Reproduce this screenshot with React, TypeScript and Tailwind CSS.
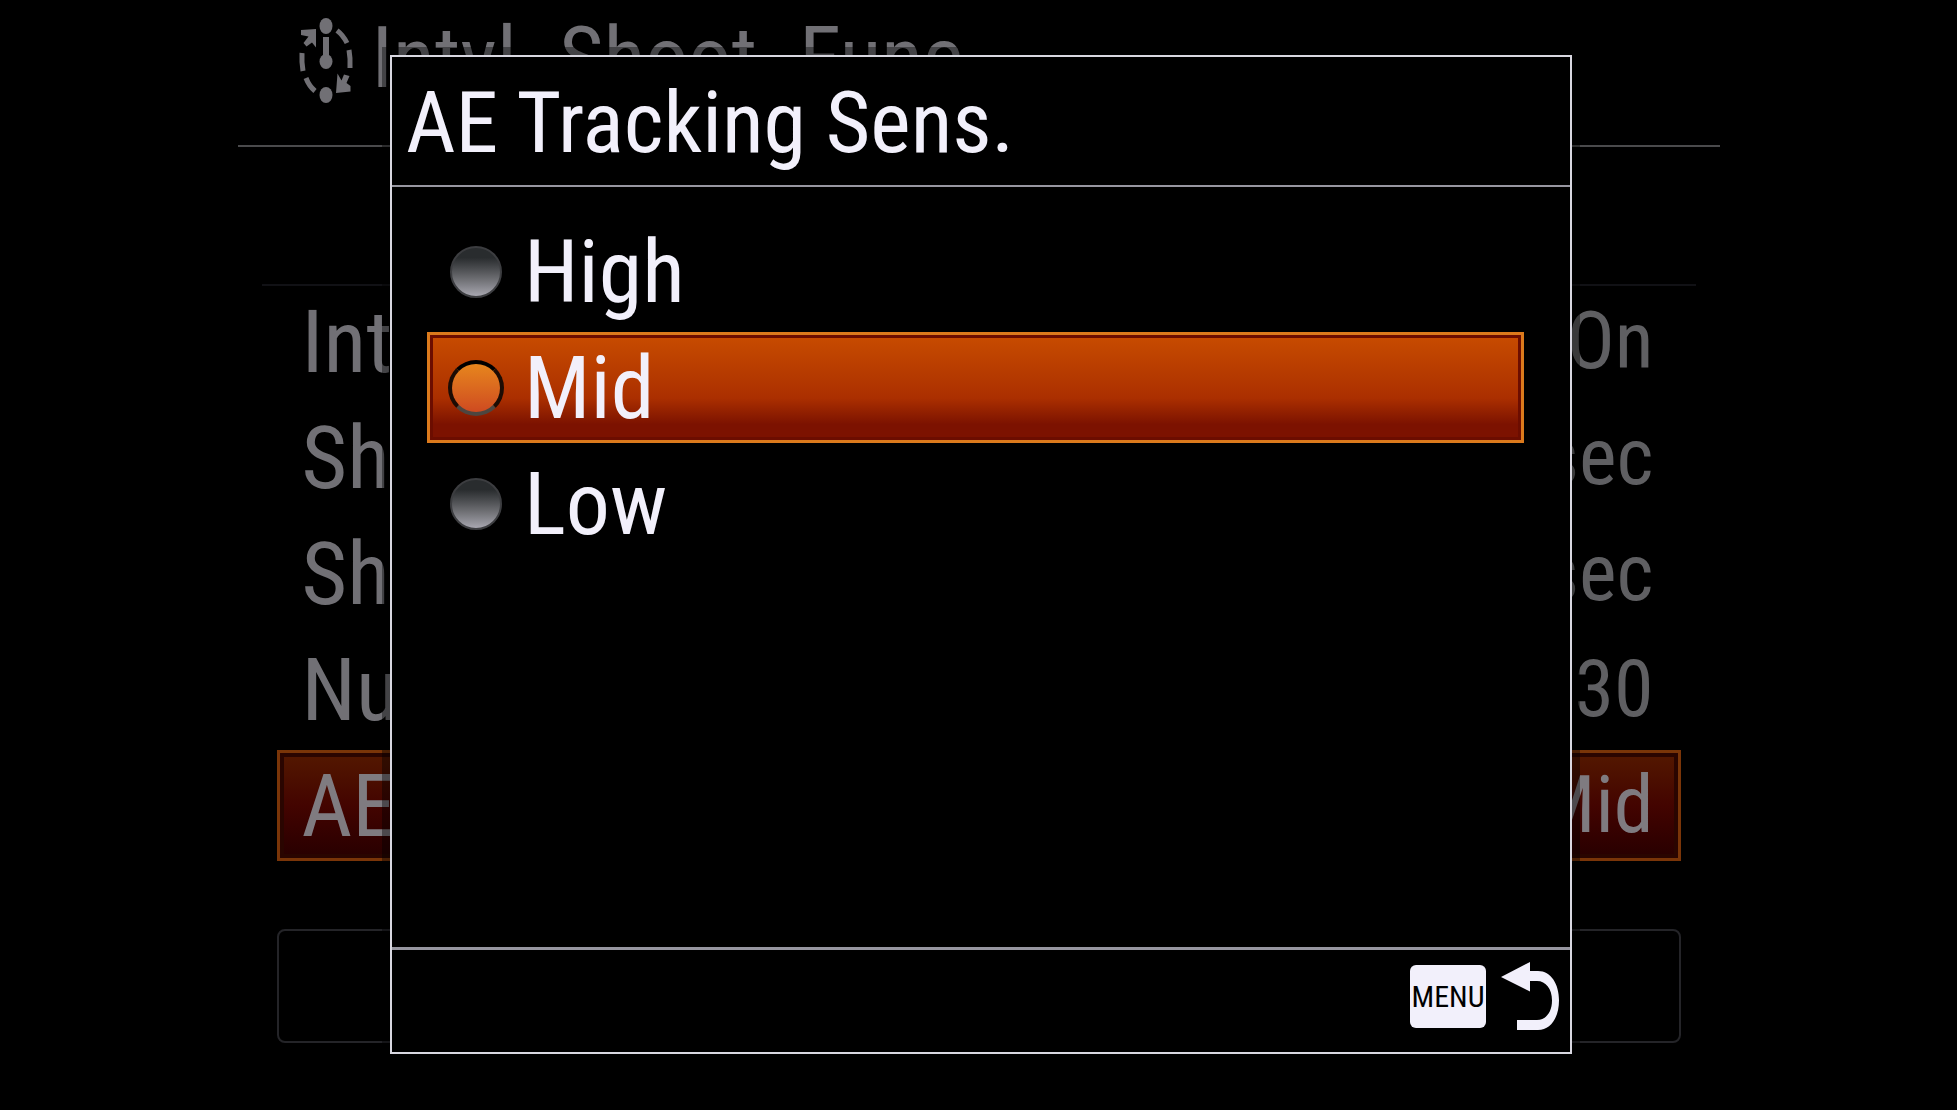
import { useState } from 'react'
import clsx from 'clsx'

const MENU_ROWS = [
  { label: 'Int', value: 'On' },
  { label: 'Sh', value: 'sec' },
  { label: 'Sh', value: 'sec' },
  { label: 'Nu', value: '30' },
  { label: 'AE', value: 'Mid', active: true },
]

const OPTIONS = ['High', 'Mid', 'Low']

function IntervalIcon() {
  return (
    <svg viewBox="0 0 56 86" className="h-[86px] w-[56px] shrink-0" fill="#717075" aria-hidden="true">
      <ellipse cx="28" cy="8" rx="6.5" ry="8" />
      <ellipse cx="28" cy="43.5" rx="6.5" ry="7.5" />
      <ellipse cx="28" cy="77" rx="6.5" ry="8" />
      <path d="M25 19h6v22h-6z" />
      <path d="M3 12 18 11V29.500L14 24.500 8.500 28.500 5.500 25 10.500 18.500 3 17z" />
      <path d="M38 75 52.500 73.500V68L48.500 65 51.500 58 46 56.500 43.500 62.500 39.500 55.500z" />
      <g fill="none" stroke="#717075" strokeWidth="5">
        <path d="M39 12.500Q45 17 49 25M51 32Q52.500 40 52 50M4 35Q3.500 44 5 53M8 60Q11 68 17 73" />
      </g>
    </svg>
  )
}

function ReturnIcon() {
  return (
    <svg viewBox="0 0 60 70" className="h-[70px] w-[60px] shrink-0" fill="#f2f0fb" aria-hidden="true">
      <path d="M1 16 30 1V10H38C51 10 59 23 59 39.500S51 69 38 69H17V59H37C46 59 52 51 52 39.500S46 20 37 20H30V30.500z" />
    </svg>
  )
}

function BackgroundMenu() {
  return (
    <main className="mx-auto w-full max-w-[1482px] text-[#717075]">
      <header className="flex h-[147px] items-start gap-[18px] border-b-2 border-[#4a4a4c] pl-[60px] pt-[18px]">
        <IntervalIcon />
        <h1 className="text-[86px] leading-[80px]">Intvl. Shoot. Func.</h1>
      </header>
      <div className="mx-6 h-[139px] border-b-2 border-[#111115]" />
      <ul className="mx-[39px] flex flex-col gap-[5px]">
        {MENU_ROWS.map((row, i) => (
          <li
            key={i}
            className={clsx(
              'flex h-[111px] items-center justify-between border-[3px] pl-[22px] pr-6 leading-[105px]',
              row.active
                ? 'border-[#7a3508] bg-linear-to-b from-[#541800] via-[#430400] to-[#280000] text-[#7f7b80] shadow-[inset_0_0_0_4px_#2a0500]'
                : 'border-transparent'
            )}
          >
            <span className="text-[88px]">{row.label}</span>
            <span className={clsx('text-[80px]', !row.active && 'text-[#5f5f62]')}>{row.value}</span>
          </li>
        ))}
      </ul>
      <div className="mx-[39px] mt-[68px] h-[114px] rounded-lg border-2 border-[#242428]" />
    </main>
  )
}

export default function App() {
  const [selected, setSelected] = useState('Mid')

  return (
    <div className="relative min-h-screen overflow-hidden bg-black font-['Roboto_Condensed','Roboto',sans-serif]">
      <BackgroundMenu />

      {/* dialog floats over the dimmed menu */}
      <div className="absolute inset-0 flex items-start justify-center pl-[5px] pt-[55px]">
        <section
          role="dialog"
          aria-labelledby="dialog-title"
          className="w-full max-w-[1182px] border-2 border-[#d8d7e0] bg-black text-[#f2f0fb] shadow-[0_0_0_8px_rgba(0,0,0,0.4)]"
        >
          <h2 id="dialog-title" className="h-[130px] border-b-2 border-[#9796a0] pl-3.5 text-[86px] leading-[132px]">
            AE Tracking Sens.
          </h2>

          <fieldset className="flex h-[760px] flex-col gap-[5px] pl-[35px] pr-[46px] pt-[29px]">
            {OPTIONS.map((option) => {
              const checked = option === selected
              return (
                <label
                  key={option}
                  className={clsx(
                    'flex h-[111px] items-center gap-5 border-[3px] pl-[18px] text-[88px] leading-[105px]',
                    checked
                      ? 'border-[#dc7a1c] bg-linear-to-b from-[#c84c00] via-[#ab2f00] via-60% to-[#7c1200] to-85% shadow-[inset_0_0_0_3px_#6c0d00]'
                      : 'border-transparent'
                  )}
                >
                  <span className="flex size-14 shrink-0 items-center justify-center">
                    <input
                      type="radio"
                      name="sensitivity"
                      value={option}
                      checked={checked}
                      onChange={() => setSelected(option)}
                      className={clsx(
                        'appearance-none rounded-full',
                        checked
                          ? 'size-14 border-4 border-[#4d4640] border-t-black border-x-[#1c0c04] bg-linear-to-b from-[#e88a1c] to-[#cc4420] bg-origin-border'
                          : 'size-[52px] border-2 border-[#3c3d40] bg-linear-to-b from-[#292c2e] from-20% via-[#66676b] via-60% to-[#a8a7b0]'
                      )}
                    />
                  </span>
                  {option}
                </label>
              )
            })}
          </fieldset>

          <footer className="flex h-[105px] items-start justify-end border-t-[3px] border-[#9796a0] pr-2.5 pt-[11px]">
            <button type="button" className="flex items-center gap-3.5">
              <span className="flex h-[63px] w-[76px] items-center justify-center rounded-md bg-[#f2f0fb] text-[30px] text-black">
                MENU
              </span>
              <ReturnIcon />
            </button>
          </footer>
        </section>
      </div>
    </div>
  )
}
